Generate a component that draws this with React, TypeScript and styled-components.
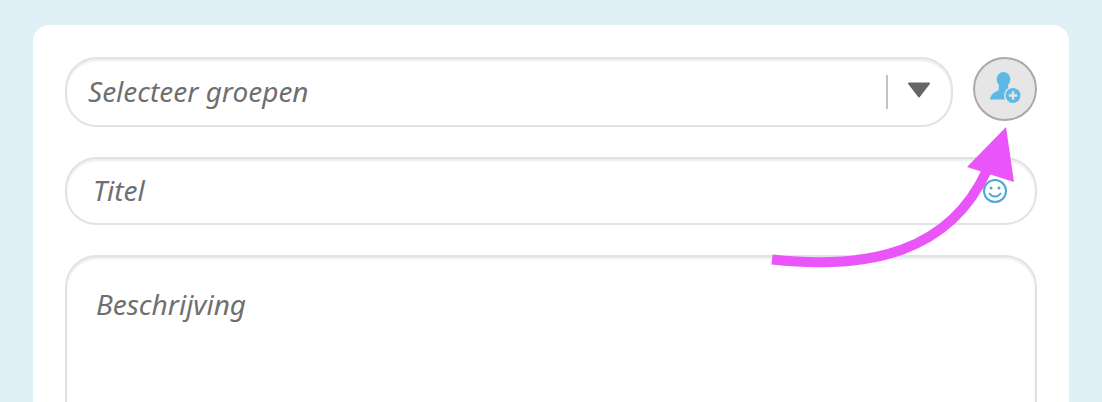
import React from "react";
import styled, { createGlobalStyle } from "styled-components";

const Global = createGlobalStyle`
  html, body { margin: 0; padding: 0; height: 402px; overflow: hidden; background: #dff0f7; }
  body { font-family: "Noto Sans", "Open Sans", sans-serif; }
`;

const Page = styled.div`
  position: relative;
  width: 1102px;
  height: 402px;
  padding: 25px 33px 0;
  box-sizing: border-box;
  overflow: hidden;
`;

const Card = styled.div`
  background: #fff;
  border-radius: 16px 16px 0 0;
  padding: 32px;
  height: 420px;
  box-sizing: border-box;
  display: flex;
  flex-direction: column;
  gap: 30px;
`;

const Row = styled.div`
  display: flex;
  gap: 20px;
  align-items: flex-start;
`;

const Field = styled.div<{ $h: number; $r: number; $pl: number }>`
  height: ${(p) => p.$h}px;
  flex: none;
  border: 2px solid #dfe3e8;
  border-radius: ${(p) => p.$r}px;
  box-shadow: inset 0 2px 2px rgba(0, 0, 0, 0.08);
  box-sizing: border-box;
  padding-left: ${(p) => p.$pl}px;
  display: flex;
  align-items: center;
`;

const SelectField = styled(Field)`
  flex: 1;
`;

const TextArea = styled(Field)`
  align-items: flex-start;
  padding-top: 28px;
`;

const Placeholder = styled.span`
  flex: 1;
  font-style: italic;
  font-size: 28px;
  line-height: 38px;
  margin-bottom: 2px;
  color: #6f6f6f;
`;

const Divider = styled.span`
  width: 2px;
  height: 34px;
  background: #c4c4c4;
  margin-right: -2px;
`;

const Caret = styled.svg`
  width: 24px;
  height: 16px;
  margin: 0 20px 4px 21px;
`;

const Smiley = styled.svg`
  width: 26px;
  height: 26px;
  margin-right: 27px;
`;

const RoundButton = styled.button`
  width: 64px;
  height: 64px;
  padding: 0;
  border: 2px solid #a9a9a9;
  border-radius: 50%;
  background: #e6e6e6;
  display: flex;
  align-items: center;
  justify-content: center;
  flex: none;
`;

const Overlay = styled.svg`
  position: absolute;
  left: 0;
  top: 0;
  width: 1102px;
  height: 402px;
  pointer-events: none;
`;

export default function App() {
  return (
    <Page>
      <Global />
      <Card>
        <Row>
          <SelectField $h={70} $r={32} $pl={21}>
            <Placeholder>Selecteer groepen</Placeholder>
            <Divider />
            <Caret viewBox="0 0 24 16">
              <path d="M2 1.500h20L12 14.500z" fill="#666" stroke="#666" strokeWidth="2" strokeLinejoin="round" />
            </Caret>
          </SelectField>
          <RoundButton aria-label="Groep toevoegen">
            <svg width="34" height="34" viewBox="0 0 34 34">
              <ellipse cx="15.500" cy="7.500" rx="6.800" ry="7.500" fill="#5cb8e4" />
              <path d="M2 27.500c.5-4.500 3.500-7 8.500-9l.5-6h9l.5 6c3 .8 4.500 2 5 4-3.500.5-6 2.500-7 5z" fill="#5cb8e4" />
              <circle cx="25" cy="23.500" r="9" fill="#e6e6e6" />
              <circle cx="25" cy="23.500" r="7.500" fill="#5cb8e4" />
              <path d="M25 19.300v8.400M20.800 23.500h8.400" stroke="#e6e6e6" strokeWidth="2.400" />
            </svg>
          </RoundButton>
        </Row>
        <Field $h={68} $r={32} $pl={26}>
          <Placeholder>Titel</Placeholder>
          <Smiley viewBox="0 0 26 26">
            <circle cx="13" cy="13" r="11" fill="none" stroke="#4aa8d4" strokeWidth="2" />
            <circle cx="9" cy="10" r="1.500" fill="#4aa8d4" />
            <circle cx="17" cy="10" r="1.500" fill="#4aa8d4" />
            <path d="M7.500 15.500c2.500 4 8.500 4 11 0" fill="none" stroke="#4aa8d4" strokeWidth="1.800" strokeLinecap="round" />
          </Smiley>
        </Field>
        <TextArea $h={200} $r={32} $pl={29}>
          <Placeholder>Beschrijving</Placeholder>
        </TextArea>
      </Card>
      <Overlay viewBox="0 0 1102 402">
        <path d="M772 259.500C870 270 950 252 987 170" fill="none" stroke="#ea55fa" strokeWidth="10" />
        <path d="M1006 127L967 167L1014 182z" fill="#ea55fa" />
      </Overlay>
    </Page>
  );
}
